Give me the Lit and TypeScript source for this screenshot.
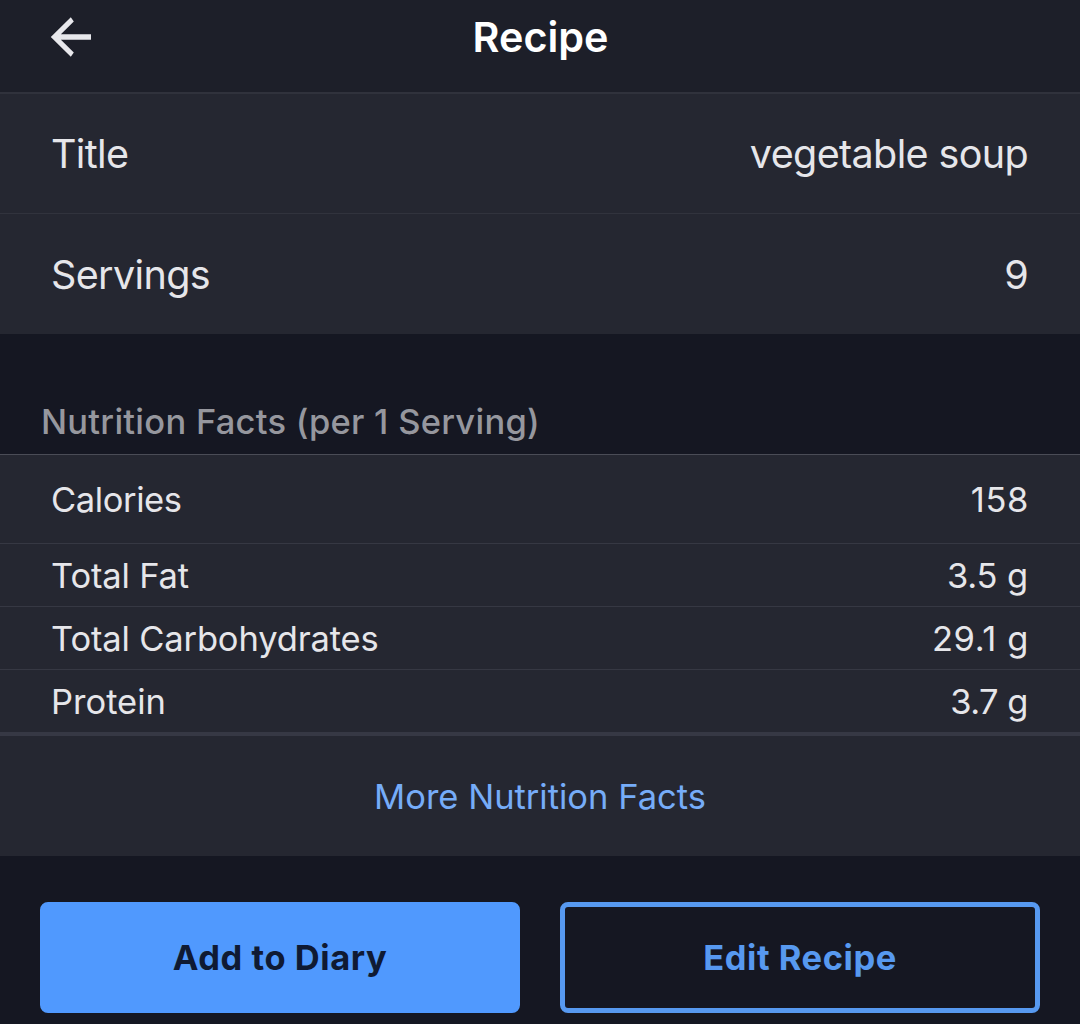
import { LitElement, html, css } from 'lit';
import { customElement, property } from 'lit/decorators.js';

@customElement('recipe-row')
export class RecipeRow extends LitElement {
  @property() label = '';
  @property() value = '';

  static styles = css`
    :host {
      display: flex;
      justify-content: space-between;
      align-items: center;
      box-sizing: border-box;
      padding: 2px 52px 0 51px;
      background: #252731;
      color: #e6e6ea;
      white-space: nowrap;
    }

    .value {
      letter-spacing: var(--recipe-row-value-spacing, inherit);
    }
  `;

  render() {
    return html`
      <span>${this.label}</span>
      <span class="value">${this.value}</span>
    `;
  }
}

@customElement('app-root')
export class AppRoot extends LitElement {
  static styles = css`
    :host {
      display: block;
      height: 1024px;
      overflow: hidden;
      background: #151722;
      font-family: Inter, 'Liberation Sans', sans-serif;
      line-height: 1.2;
    }

    .header {
      display: grid;
      grid-template-columns: 1fr auto 1fr;
      align-items: center;
      box-sizing: border-box;
      height: 94px;
      padding: 0 50px 18px;
      border-bottom: 2px solid #30323c;
      background: #1d1f29;
    }

    .back {
      display: block;
      width: 42px;
      height: 42px;
    }

    .heading {
      margin: 0;
      padding: 2px 0 0 1px;
      color: #fff;
      font-size: 41.3px;
      font-weight: 600;
    }

    .info {
      height: 120px;
      padding-top: 3px;
      font-size: 39.5px;
      letter-spacing: -0.63px;
    }

    .info.first {
      padding-top: 2px;
      border-bottom: 1px solid #31333d;
    }

    .section {
      display: flex;
      align-items: flex-end;
      box-sizing: border-box;
      height: 121px;
      padding: 0 40px 12px 41px;
      border-bottom: 1px solid #4a4c56;
      color: #96979e;
      font-size: 34.5px;
      font-weight: 500;
      letter-spacing: 0.26px;
    }

    .fact {
      height: 63px;
      border-bottom: 1px solid #363843;
      font-size: 34.5px;
      letter-spacing: -0.15px;
    }

    .fact.tall {
      height: 89px;
      letter-spacing: -0.4px;
    }

    .fact.last {
      height: 66px;
      border-bottom: 4px solid #363844;
      letter-spacing: 0;
    }

    .loose {
      --recipe-row-value-spacing: 0.6px;
      padding-right: 51px;
    }

    .tight {
      --recipe-row-value-spacing: -0.5px;
    }

    .more {
      display: flex;
      justify-content: center;
      align-items: center;
      box-sizing: border-box;
      height: 120px;
      padding-top: 2px;
      background: #252731;
      color: #76acf8;
      font-size: 34.5px;
    }

    .actions {
      display: grid;
      grid-template-columns: 1fr 1fr;
      gap: 40px;
      padding: 46px 40px 0;
    }

    .button {
      box-sizing: border-box;
      height: 111px;
      padding: 0;
      border: 5px solid #5099fe;
      border-radius: 8px;
      background: #5099fe;
      color: #0f1a33;
      font: 700 34.5px Inter, 'Liberation Sans', sans-serif;
      letter-spacing: 0.55px;
    }

    .button.outline {
      border-color: #5799f0;
      background: transparent;
      color: #5799f0;
    }
  `;

  render() {
    return html`
      <div class="header">
        <svg class="back" viewBox="0 0 42 42" fill="#e8e8ec">
          <path d="M41 18.3V23.8H10.9L23.8 36.6L20.8 40.8L0.8 21L20.8 1.2L23.8 5.4L10.9 18.3Z" />
        </svg>
        <h1 class="heading">Recipe</h1>
      </div>

      <recipe-row class="info first" label="Title" value="vegetable soup"></recipe-row>
      <recipe-row class="info" label="Servings" value="9"></recipe-row>

      <div class="section">Nutrition Facts (per 1 Serving)</div>
      <recipe-row class="fact tall loose" label="Calories" value="158"></recipe-row>
      <recipe-row class="fact" label="Total Fat" value="3.5 g"></recipe-row>
      <recipe-row class="fact loose" label="Total Carbohydrates" value="29.1 g"></recipe-row>
      <recipe-row class="fact last tight" label="Protein" value="3.7 g"></recipe-row>
      <div class="more">More Nutrition Facts</div>

      <div class="actions">
        <button class="button">Add to Diary</button>
        <button class="button outline">Edit Recipe</button>
      </div>
    `;
  }
}
